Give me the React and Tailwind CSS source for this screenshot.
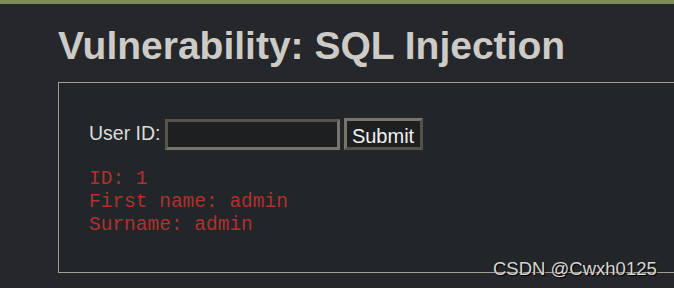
import React from "react";

export default function App() {
  return (
    <div className="relative w-[674px] h-[288px] overflow-hidden bg-[#25272a] font-['Liberation_Sans',Arial,sans-serif]">
      <div className="h-[4px] bg-[#7b8c55]" />
      <div className="pl-[58px]">
        <h1 className="mt-[20px] text-[39px] leading-[44px] font-bold text-[#cdcbc7] whitespace-nowrap">
          Vulnerability: SQL Injection
        </h1>
        <div className="mt-[14px] w-[700px] h-[191px] border border-[#a19e97] bg-[#222628] pl-[30px] pt-[35px]">
          <form className="flex items-center" onSubmit={(e) => e.preventDefault()}>
            <label className="text-[19.5px] text-[#dcdcdc] mr-[4px]">User ID:</label>
            <input
              type="text"
              className="w-[175px] h-[31px] bg-[#1e1f21] border-[3px] border-t-[#57534d] border-l-[#57534d] border-b-[#78736c] border-r-[#78736c] outline-none"
            />
            <button
              type="submit"
              className="ml-[4px] w-[79px] h-[32px] bg-[#1e1f21] text-[20px] text-[#f0f0f0] border-[3px] border-t-[#78736c] border-l-[#78736c] border-b-[#55514b] border-r-[#55514b]"
            >
              Submit
            </button>
          </form>
          <pre className="mt-[18px] font-['Liberation_Mono','Courier_New',monospace] text-[19.5px] leading-[23px] text-[#b03030]">
{`ID: 1
First name: admin
Surname: admin`}
          </pre>
        </div>
      </div>
      <div className="absolute left-[493px] top-[257px] text-[18.5px] leading-[24px] text-[#d6d6d6] [text-shadow:1px_1px_1px_#000] whitespace-nowrap">
        CSDN @Cwxh0125
      </div>
    </div>
  );
}
